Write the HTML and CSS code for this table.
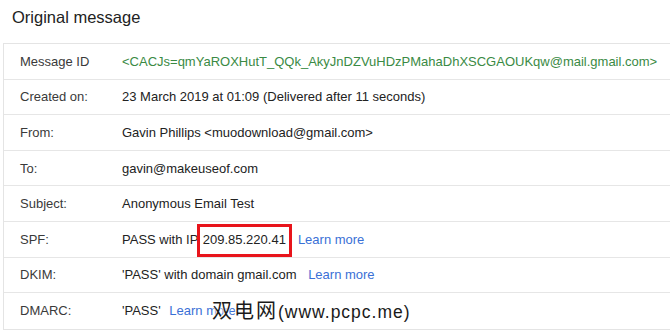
FILE: index.html
```html
<!DOCTYPE html>
<html lang="en">
<head>
<meta charset="utf-8">
<title>Original message</title>
<link rel="stylesheet" href="styles.css">
</head>
<body>
<div class="page">
  <h1 class="title">Original message</h1>
  <div class="details">
    <div class="row"><div class="label">Message ID</div><div class="value msgid">&lt;CACJs=qmYaROXHutT_QQk_AkyJnDZVuHDzPMahaDhXSCGAOUKqw@mail.gmail.com&gt;</div></div>
    <div class="row"><div class="label">Created on:</div><div class="value">23 March 2019 at 01:09 (Delivered after 11 seconds)</div></div>
    <div class="row"><div class="label">From:</div><div class="value">Gavin Phillips &lt;muodownload@gmail.com&gt;</div></div>
    <div class="row"><div class="label">To:</div><div class="value">gavin@makeuseof.com</div></div>
    <div class="row"><div class="label">Subject:</div><div class="value">Anonymous Email Test</div></div>
    <div class="row"><div class="label">SPF:</div><div class="value">PASS with IP <span class="ip">209.85.220.41</span><a class="link link-spf" href="#">Learn more</a></div></div>
    <div class="row"><div class="label">DKIM:</div><div class="value">'PASS' with domain gmail.com <a class="link" href="#">Learn more</a></div></div>
    <div class="row"><div class="label">DMARC:</div><div class="value">'PASS' <a class="link link-dmarc" href="#">Learn more</a></div></div>
  </div>
  <div class="watermark"><span class="wm-cjk">双电网</span><span class="wm-url">(www.pcpc.me)</span></div>
</div>
</body>
</html>
```

FILE: styles.css
```css
html, body {
  margin: 0;
  padding: 0;
  background: #ffffff;
  overflow: hidden;
}
.page {
  position: relative;
  width: 670px;
  height: 334px;
  overflow: hidden;
  font-family: "Liberation Sans", Arial, sans-serif;
  color: #222222;
}
.title {
  margin: 0;
  padding: 5px 0 0 12px;
  height: 43px;
  box-sizing: border-box;
  font-size: 16.5px;
  font-weight: normal;
  line-height: 24px;
  color: #222222;
}
.details {
  margin-left: 3px;
  margin-right: -40px;
  border: 1px solid #e4e4e4;
  border-right: none;
}
.row {
  display: flex;
  align-items: center;
  height: 35.6px;
  box-sizing: border-box;
  border-bottom: 1px solid #e6e6e6;
  font-size: 13px;
}
.row:last-child {
  border-bottom: none;
}
.label {
  width: 102px;
  padding-left: 16px;
  flex: none;
  color: #3a3a3a;
}
.value {
  white-space: nowrap;
  color: #222222;
}
.msgid {
  color: #3a8a44;
}
.ip {
  position: relative;
  margin-left: 1px;
}
.ip::after {
  content: "";
  position: absolute;
  left: -6px;
  right: -6px;
  top: -8px;
  bottom: -10px;
  border: 3px solid #e8141b;
}
.link {
  color: #3a70d6;
  text-decoration: none;
  margin-left: 8px;
}
.link-spf {
  margin-left: 12px;
}
.link-dmarc {
  margin-left: 5px;
}
.watermark {
  position: absolute;
  left: 212px;
  top: 295px;
  line-height: 30px;
  color: #1a1a1a;
  white-space: nowrap;
  text-shadow: 0 0 2px #ffffff, 0 0 2px #ffffff, 0 0 3px #ffffff;
}
.wm-cjk {
  font-family: "Noto Sans CJK SC", sans-serif;
  font-size: 20px;
  letter-spacing: 2px;
}
.wm-url {
  font-family: "Liberation Sans", "Noto Sans CJK SC", sans-serif;
  font-size: 17.5px;
  letter-spacing: 1px;
}
```
